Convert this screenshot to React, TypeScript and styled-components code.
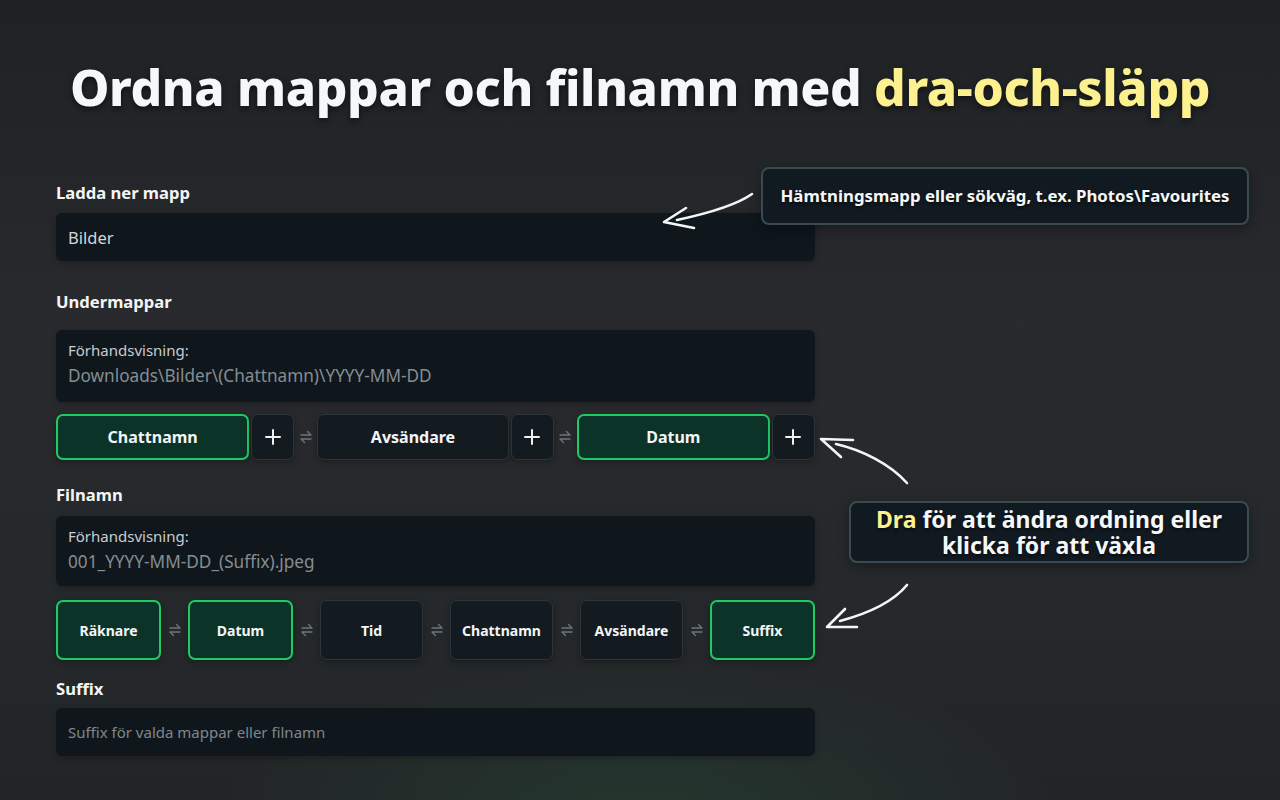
import React from 'react';
import styled, { createGlobalStyle } from 'styled-components';

const GlobalStyle = createGlobalStyle`
  html, body {
    margin: 0;
    padding: 0;
    background: #232629;
  }
  * { box-sizing: border-box; }
`;

const Page = styled.div`
  position: relative;
  width: 1280px;
  height: 800px;
  overflow: hidden;
  font-family: "Noto Sans", "Open Sans", sans-serif;
  color: #f2f4f5;
  background:
    radial-gradient(ellipse 420px 160px at 640px 820px, rgba(40, 90, 60, 0.35), rgba(40, 90, 60, 0) 100%),
    linear-gradient(180deg, #1f2225 0%, #282a2d 40%, #26292b 75%, #222527 100%);
`;

const Title = styled.h1`
  margin: 0;
  padding-top: 54px;
  height: 150px;
  text-align: center;
  font-size: 49.8px;
  font-weight: 800;
  letter-spacing: -0.35px;
  line-height: 66px;
  color: #f6f7f8;
  text-shadow: 0 3px 6px rgba(0, 0, 0, 0.55);
`;

const Highlight = styled.span`
  color: #fdf08f;
`;

const Form = styled.div`
  width: 759px;
  margin-left: 56px;
  margin-top: 32px;
  display: flex;
  flex-direction: column;
`;

const Label = styled.div<{ $mt?: number; $mb?: number }>`
  margin-top: ${({ $mt }) => $mt ?? 0}px;
  margin-bottom: ${({ $mb }) => $mb ?? 0}px;
  font-size: 16.6px;
  font-weight: 700;
  line-height: 22px;
  color: #f4f5f6;
`;

const Field = styled.div<{ $muted?: boolean }>`
  height: 48px;
  border-radius: 6px;
  background: #0f171c;
  display: flex;
  align-items: center;
  padding: 0 12px;
  font-size: ${({ $muted }) => ($muted ? '15px' : '16.5px')};
  color: ${({ $muted }) => ($muted ? '#7f878c' : '#d3d7d9')};
  box-shadow: 0 2px 6px rgba(0, 0, 0, 0.25);
`;

const Preview = styled.div<{ $h: number }>`
  height: ${({ $h }) => $h}px;
  border-radius: 6px;
  background: #0f171c;
  padding: 10px 12px 0;
  display: flex;
  flex-direction: column;
  gap: 5px;
  box-shadow: 0 2px 6px rgba(0, 0, 0, 0.25);
`;

const PreviewCaption = styled.div`
  font-size: 15px;
  line-height: 20px;
  color: #c9cdcf;
`;

const PreviewPath = styled.div`
  font-size: 17.2px;
  line-height: 22px;
  color: #858d92;
`;

const ChipRow = styled.div<{ $mt: number }>`
  margin-top: ${({ $mt }) => $mt}px;
  display: flex;
  align-items: stretch;
`;

const Chip = styled.div<{ $active?: boolean; $h: number; $small?: boolean }>`
  flex: 1;
  height: ${({ $h }) => $h}px;
  border-radius: 7px;
  display: flex;
  align-items: center;
  justify-content: center;
  font-size: ${({ $small }) => ($small ? '14px' : '16px')};
  font-weight: 700;
  color: #f3f5f6;
  background: ${({ $active }) => ($active ? '#0c3328' : '#131b21')};
  border: ${({ $active }) => ($active ? '2px solid #1ecb62' : '1px solid #2c353b')};
  box-shadow: 0 2px 6px rgba(0, 0, 0, 0.3);
`;

const PlusButton = styled.div`
  width: 43px;
  margin-left: 2px;
  border-radius: 7px;
  display: flex;
  align-items: center;
  justify-content: center;
  background: #131b21;
  border: 1px solid #2c353b;
  box-shadow: 0 2px 6px rgba(0, 0, 0, 0.3);
`;

const Swap = styled.div<{ $w: number }>`
  width: ${({ $w }) => $w}px;
  display: flex;
  align-items: center;
  justify-content: center;
`;

const Callout = styled.div<{ $x: number; $y: number; $w: number; $h: number }>`
  position: absolute;
  left: ${({ $x }) => $x}px;
  top: ${({ $y }) => $y}px;
  width: ${({ $w }) => $w}px;
  height: ${({ $h }) => $h}px;
  border-radius: 8px;
  border: 2px solid #3b4a50;
  background: #111a20;
  display: flex;
  flex-direction: column;
  align-items: center;
  justify-content: center;
  text-align: center;
  white-space: nowrap;
  font-weight: 700;
  color: #f6f7f8;
  text-shadow: 0 2px 3px rgba(0, 0, 0, 0.5);
  box-shadow: 0 4px 12px rgba(0, 0, 0, 0.35);
`;

const CalloutLine = styled.div<{ $size: number; $lh: number }>`
  font-size: ${({ $size }) => $size}px;
  line-height: ${({ $lh }) => $lh}px;
`;

const Arrows = styled.svg`
  position: absolute;
  left: 0;
  top: 0;
  pointer-events: none;
`;

const PlusIcon = () => (
  <svg width="18" height="18" viewBox="0 0 18 18">
    <path d="M9 2v14M2 9h14" stroke="#eef0f1" strokeWidth="2" strokeLinecap="round" />
  </svg>
);

const SwapIcon = () => (
  <svg width="12" height="14" viewBox="0 0 12 14">
    <path d="M1 5h10L7.5 1.5" stroke="#6d767b" strokeWidth="1.3" fill="none" strokeLinecap="round" strokeLinejoin="round" />
    <path d="M11 9H1l3.5 3.5" stroke="#6d767b" strokeWidth="1.3" fill="none" strokeLinecap="round" strokeLinejoin="round" />
  </svg>
);

const folderChips = [
  { name: 'Chattnamn', active: true },
  { name: 'Avsändare', active: false },
  { name: 'Datum', active: true },
];

const fileChips = [
  { name: 'Räknare', active: true },
  { name: 'Datum', active: true },
  { name: 'Tid', active: false },
  { name: 'Chattnamn', active: false },
  { name: 'Avsändare', active: false },
  { name: 'Suffix', active: true },
];

export default function App() {
  return (
    <Page>
      <GlobalStyle />
      <Title>
        Ordna mappar och filnamn med <Highlight>dra-och-släpp</Highlight>
      </Title>

      <Form>
        <Label $mb={9}>Ladda ner mapp</Label>
        <Field>Bilder</Field>

        <Label $mt={30} $mb={17}>Undermappar</Label>
        <Preview $h={72}>
          <PreviewCaption>Förhandsvisning:</PreviewCaption>
          <PreviewPath>Downloads\Bilder\(Chattnamn)\YYYY-MM-DD</PreviewPath>
        </Preview>
        <ChipRow $mt={12}>
          {folderChips.map((c, i) => (
            <React.Fragment key={c.name}>
              {i > 0 && (
                <Swap $w={23}>
                  <SwapIcon />
                </Swap>
              )}
              <Chip $active={c.active} $h={46}>
                {c.name}
              </Chip>
              <PlusButton>
                <PlusIcon />
              </PlusButton>
            </React.Fragment>
          ))}
        </ChipRow>

        <Label $mt={24} $mb={10}>Filnamn</Label>
        <Preview $h={70}>
          <PreviewCaption>Förhandsvisning:</PreviewCaption>
          <PreviewPath>001_YYYY-MM-DD_(Suffix).jpeg</PreviewPath>
        </Preview>
        <ChipRow $mt={14}>
          {fileChips.map((c, i) => (
            <React.Fragment key={c.name}>
              {i > 0 && (
                <Swap $w={27}>
                  <SwapIcon />
                </Swap>
              )}
              <Chip $active={c.active} $h={60} $small>
                {c.name}
              </Chip>
            </React.Fragment>
          ))}
        </ChipRow>

        <Label $mt={18} $mb={8}>Suffix</Label>
        <Field $muted>Suffix för valda mappar eller filnamn</Field>
      </Form>

      <Callout $x={761} $y={167} $w={488} $h={58}>
        <CalloutLine $size={16.8} $lh={22}>
          Hämtningsmapp eller sökväg, t.ex. Photos\Favourites
        </CalloutLine>
      </Callout>
      <Callout $x={849} $y={501} $w={400} $h={62}>
        <CalloutLine $size={23} $lh={26}>
          <Highlight>Dra</Highlight> för att ändra ordning eller
        </CalloutLine>
        <CalloutLine $size={23} $lh={26}>
          klicka för att växla
        </CalloutLine>
      </Callout>

      <Arrows width="1280" height="800" viewBox="0 0 1280 800">
        <g stroke="#f4f5f6" strokeWidth="2.6" fill="none" strokeLinecap="round" strokeLinejoin="round">
          <path d="M752 194 C 735 206, 705 214, 677 220" />
          <path d="M686 208 L 664 222 L 694 228" />
          <path d="M907 483 C 890 464, 862 450, 836 444" />
          <path d="M853 440 L 821 439 L 841 457" />
          <path d="M907 585 C 893 602, 866 614, 840 621" />
          <path d="M845 609 L 827 627 L 857 627" />
        </g>
      </Arrows>
    </Page>
  );
}
